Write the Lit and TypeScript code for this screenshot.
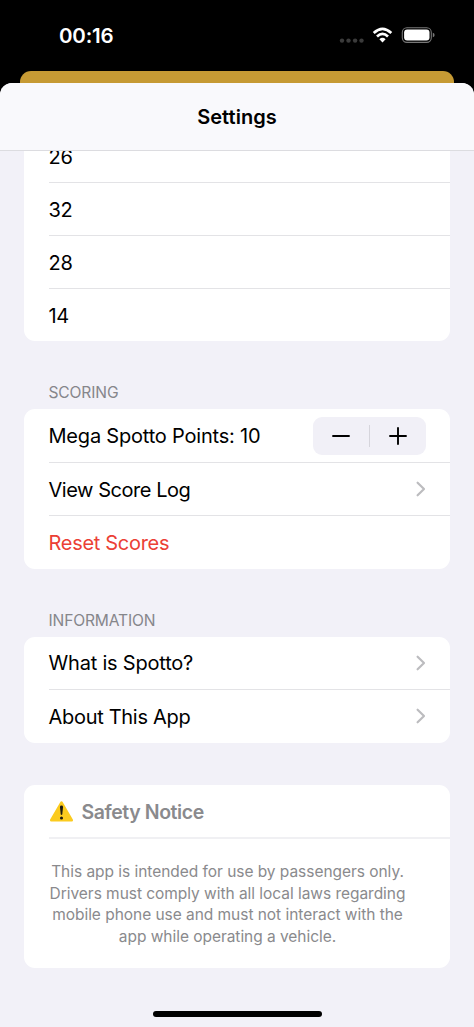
import { LitElement, html, css, nothing } from "lit";
import { customElement, property } from "lit/decorators.js";

@customElement("status-bar")
class StatusBar extends LitElement {
  static styles = css`
    :host { display: flex; height: 71px; justify-content: space-between; background: #000; color: #fff; box-sizing: border-box; padding: 0 39px 0 59px; }
    .time { font-size: 20.5px; line-height: 24px; font-weight: 600; letter-spacing: -0.2px; margin-top: 24px; }
    svg { display: block; margin-top: 25px; }
  `;
  render() {
    return html`
      <div class="time">00:16</div>
      <svg width="96" height="20" viewBox="0 0 96 20">
        <g fill="#3b3b3b">
          <circle cx="3" cy="15.6" r="2.2" /><circle cx="9.5" cy="15.6" r="2.2" />
          <circle cx="16.1" cy="15.6" r="2.2" /><circle cx="22.5" cy="15.6" r="2.2" />
        </g>
        <g fill="none" stroke="#fff" stroke-width="2.7">
          <path d="M34.7 8Q43.5 -0.2 52.3 8" />
          <path d="M38 11.5Q43.5 6.3 49 11.5" />
        </g>
        <path d="M43.5 17.4L40.4 14.2Q43.5 11.4 46.6 14.2Z" fill="#fff" />
        <rect x="63.3" y="2.8" width="29" height="14.6" rx="4.6" fill="none" stroke="#777" stroke-width="1.1" />
        <rect x="65.1" y="4.6" width="25.4" height="11" rx="3" fill="#fff" />
        <path d="M93.8 7.7Q95.6 8.3 95.6 10Q95.6 11.7 93.8 12.3Z" fill="#777" />
      </svg>
    `;
  }
}

@customElement("list-row")
class ListRow extends LitElement {
  @property() label = "";
  @property({ type: Boolean }) chevron = false;
  static styles = css`
    :host { display: flex; height: 53px; box-sizing: border-box; margin-left: 24.5px; padding-right: 24px; align-items: center; justify-content: space-between; border-bottom: 1px solid #e3e3e6; color: #000; font-size: 20px; letter-spacing: -0.3px; white-space: nowrap; }
    :host(.last) { height: 52.5px; border-bottom: none; }
    :host(.danger) { color: #eb4035; }
    :host(.wide) { letter-spacing: -0.2px; }
    :host(.tight) { letter-spacing: -0.45px; }
    .label { padding-top: 1px; }
    .chev { display: block; }
  `;
  render() {
    return html`
      <span class="label">${this.label}</span>
      <slot></slot>
      ${this.chevron
        ? html`<svg class="chev" width="10" height="16" viewBox="0 0 10 16"><path d="M1.6 1.7L8 8L1.6 14.3" fill="none" stroke="#bcbcbf" stroke-width="2.2" stroke-linecap="round" stroke-linejoin="round" /></svg>`
        : nothing}
    `;
  }
}

@customElement("points-stepper")
class PointsStepper extends LitElement {
  static styles = css`
    :host { display: flex; width: 113px; height: 38px; border-radius: 9px; background: #f1f0f7; align-items: center; }
    .half { flex: 1; display: flex; justify-content: center; }
    .rule { width: 1px; height: 22px; background: #d6d5dc; }
  `;
  render() {
    return html`
      <div class="half"><svg width="18" height="18" viewBox="0 0 18 18"><path d="M1 9H17" stroke="#000" stroke-width="1.9" stroke-linecap="round" /></svg></div>
      <div class="rule"></div>
      <div class="half"><svg width="18" height="18" viewBox="0 0 18 18"><path d="M1 9H17M9 1V17" stroke="#000" stroke-width="1.9" stroke-linecap="round" /></svg></div>
    `;
  }
}

@customElement("app-root")
class AppRoot extends LitElement {
  static styles = css`
    :host { display: block; width: 474px; height: 1027px; overflow: hidden; background: #000; font-family: Inter, "Liberation Sans", sans-serif; }
    .behind { height: 12px; margin: 0 20px; border-radius: 11px 11px 0 0; background: #c69a34; }
    .sheet { height: 944px; border-radius: 12px 12px 0 0; background: #f2f1f8; overflow: hidden; display: flex; flex-direction: column; }
    .nav { height: 67px; flex: none; display: flex; align-items: center; justify-content: center; background: #f9f9fc; border-bottom: 1px solid #dcdce0; font-size: 20px; font-weight: 600; letter-spacing: 0.05px; }
    .body { flex: 1; overflow: hidden; padding: 0 24px; }
    .card { background: #fff; border-radius: 11px; overflow: hidden; }
    .numbers { height: 211px; margin-top: -21px; border-radius: 0 0 11px 11px; }
    .points { height: 54px; }
    .about { height: 53.5px; }
    .caption { height: 68px; box-sizing: border-box; padding: 42px 0 0 24.5px; font-size: 15.6px; line-height: 20px; letter-spacing: -0.15px; color: #86868b; }
    .notice { margin-top: 42.5px; height: 183px; }
    .notice-head { display: flex; align-items: center; gap: 8px; height: 54px; box-sizing: border-box; margin-left: 24.5px; padding-top: 1px; border-bottom: 2px solid #f0f0f3; font-size: 19.5px; font-weight: 600; letter-spacing: -0.42px; color: #8a8a8d; }
    .notice-text { padding: 22px 41px 0 22px; text-align: center; font-size: 15.5px; line-height: 21.7px; letter-spacing: -0.04px; color: #8a8a8d; white-space: nowrap; }
    .home { width: 169px; height: 6px; border-radius: 3px; background: #000; margin: 43px auto 0; }
  `;
  render() {
    return html`
      <status-bar></status-bar>
      <div class="behind"></div>
      <div class="sheet">
        <div class="nav">Settings</div>
        <div class="body">
          <div class="card numbers">
            ${["26", "32", "28", "14"].map((n, i) => html`<list-row class=${i === 3 ? "last" : ""} label=${n}></list-row>`)}
          </div>
          <div class="caption">SCORING</div>
          <div class="card">
            <list-row class="wide points" label="Mega Spotto Points: 10"><points-stepper></points-stepper></list-row>
            <list-row class="tight" label="View Score Log" chevron></list-row>
            <list-row class="last danger" label="Reset Scores"></list-row>
          </div>
          <div class="caption">INFORMATION</div>
          <div class="card">
            <list-row class="wide about" label="What is Spotto?" chevron></list-row>
            <list-row class="last" label="About This App" chevron></list-row>
          </div>
          <div class="card notice">
            <div class="notice-head">
              <svg width="25" height="23" viewBox="0 0 26 23">
                <path d="M13 2.2L23.6 20.6H2.4Z" fill="#fbcb1f" stroke="#fbcb1f" stroke-width="2.8" stroke-linejoin="round" />
                <path d="M11.4 6.8Q11.4 5.3 13 5.3Q14.6 5.3 14.6 6.8L13.8 14.6Q13 15.6 12.2 14.6Z" fill="#1c1a10" />
                <circle cx="13" cy="18.3" r="1.6" fill="#1c1a10" />
              </svg>
              <span>Safety Notice</span>
            </div>
            <div class="notice-text">
              This app is intended for use by passengers only.<br />
              Drivers must comply with all local laws regarding<br />
              mobile phone use and must not interact with the<br />
              app while operating a vehicle.
            </div>
          </div>
          <div class="home"></div>
        </div>
      </div>
    `;
  }
}
